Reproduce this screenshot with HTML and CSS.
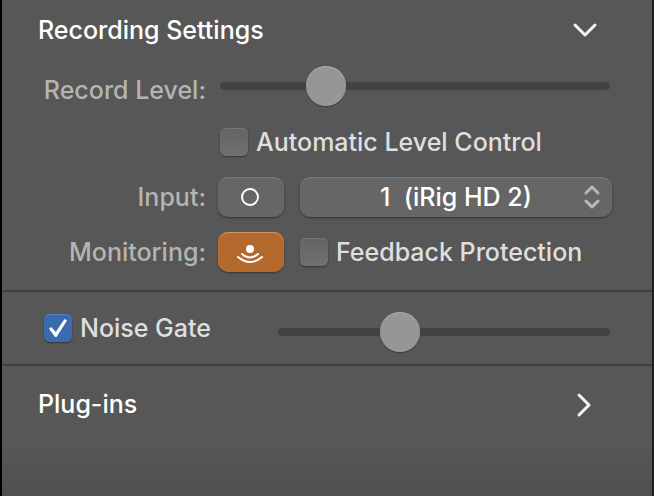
FILE: index.html
```html
<!DOCTYPE html>
<html lang="en">
  <head>
    <meta charset="UTF-8" />
    <meta name="viewport" content="width=device-width, initial-scale=1.0" />
    <title>Recording Settings</title>
    <link rel="stylesheet" href="styles.css">
  </head>
  <body>
    <main class="panel">
      <section class="section recording">
        <button class="section-header" type="button" aria-expanded="true">
          Recording Settings
          <svg class="chevron" viewBox="0 0 28 28" aria-hidden="true">
            <path d="M4 9l10 10L24 9" />
          </svg>
        </button>
        <div class="settings">
          <label class="name name-low" for="level">Record Level:</label>
          <div class="inset">
            <input class="slider" id="level" type="range" min="0" max="1000" value="246" />
          </div>

          <div class="inset second-column">
            <label class="check">
              <input type="checkbox" />
              Automatic Level Control
            </label>
          </div>

          <label class="name" for="input">Input:</label>
          <div class="controls">
            <button class="toggle" type="button" aria-label="Mono">
              <svg class="icon" viewBox="0 0 28 28" aria-hidden="true">
                <circle cx="13" cy="14" r="8" />
              </svg>
            </button>
            <div class="select-wrap">
              <select class="select" id="input">
                <option>1&nbsp; (iRig HD 2)</option>
              </select>
              <svg class="arrows" viewBox="0 0 16 24" aria-hidden="true">
                <path d="M2 8l6-6 6 6M2 16l6 6 6-6" />
              </svg>
            </div>
          </div>

          <label class="name" for="monitoring">Monitoring:</label>
          <div class="controls">
            <button class="toggle toggle-on" id="monitoring" type="button" aria-pressed="true">
              <svg class="icon" viewBox="0 0 28 28" aria-hidden="true">
                <circle class="dot" cx="13" cy="11" r="4" />
                <path d="M5 16q8 7 16 0M1 19q12 10 24 0" />
              </svg>
            </button>
            <label class="check">
              <input type="checkbox" />
              Feedback Protection
            </label>
          </div>
        </div>
      </section>

      <section class="section gate">
        <label class="check">
          <input type="checkbox" checked />
          Noise Gate
        </label>
        <input class="slider" type="range" min="0" max="100" value="35" aria-label="Noise Gate" />
      </section>

      <section class="plugins">
        <button class="section-header" type="button" aria-expanded="false">
          Plug-ins
          <svg class="chevron" viewBox="0 0 28 28" aria-hidden="true">
            <path d="M8 5l10 10L8 25" />
          </svg>
        </button>
      </section>
    </main>
  </body>
</html>
```
FILE: styles.css
```css
* {
  box-sizing: border-box;
}
body {
  margin: 0;
  background: #575757;
  color: #dfdfdf;
  font-family: Inter, "Liberation Sans", sans-serif;
  font-size: 25px;
  font-weight: 500;
  line-height: 32px;
}
button,
select,
input {
  font: inherit;
  margin: 0;
}
.panel {
  min-height: 100vh;
  border-left: 2px solid #000;
  border-right: 2px solid #1e1e1e;
  background: linear-gradient(to top, #4f4f4f, #575757 50px);
}
.section {
  border-bottom: 2px solid #404040;
}

/* section headers */
.section-header {
  display: flex;
  justify-content: space-between;
  align-items: center;
  width: 100%;
  height: 60px;
  padding: 0 53px 0 36px;
  border: none;
  background: none;
  color: #fff;
}
.chevron {
  width: 28px;
  height: 28px;
  fill: none;
  stroke: #f4f4f4;
  stroke-width: 3;
  stroke-linecap: round;
  stroke-linejoin: round;
}

/* recording settings */
.settings {
  display: grid;
  grid-template-columns: 168px 1fr;
  grid-template-rows: 40px 40px 38px 40px;
  gap: 16px 12px;
  align-items: center;
  padding: 6px 40px 18px 36px;
}
.name {
  color: #b4b4b4;
  text-align: right;
  white-space: nowrap;
}
.name-low {
  align-self: end;
}
.inset {
  display: flex;
  padding: 0 2px;
}
.second-column {
  grid-column: 2;
}
.controls {
  display: flex;
  align-items: center;
  gap: 16px;
}

/* slider */
.slider {
  appearance: none;
  width: 100%;
  height: 40px;
  background: none;
}
.slider::-webkit-slider-runnable-track {
  height: 8px;
  border-radius: 4px;
  background: #424242;
}
.slider::-webkit-slider-thumb {
  appearance: none;
  width: 40px;
  height: 40px;
  margin-top: -16px;
  border-radius: 50%;
  background: #969696;
  box-shadow: 0 1px 1px rgba(0, 0, 0, 0.3), inset 0 1px 1px #aaa;
}

/* checkbox */
.check {
  display: flex;
  align-items: center;
  gap: 8px;
  white-space: nowrap;
}
.check input {
  appearance: none;
  flex: none;
  width: 28px;
  height: 28px;
  border-radius: 6px;
  background: linear-gradient(#646464, #707070);
  box-shadow: 0 1px 2px rgba(0, 0, 0, 0.4), inset 0 1px 0 #777;
}
.check input:checked {
  display: grid;
  place-items: center;
  background: #3a6bb0;
  box-shadow: 0 1px 2px rgba(0, 0, 0, 0.4), inset 0 1px 0 #5480bd;
}
.check input:checked::before {
  content: "";
  width: 18px;
  height: 18px;
  background: #fff;
  clip-path: polygon(0 54%, 12% 44%, 38% 72%, 86% 0, 100% 9%, 42% 100%, 34% 100%);
}

/* buttons and select */
.toggle {
  display: flex;
  justify-content: center;
  align-items: center;
  flex: none;
  width: 66px;
  height: 40px;
  padding: 0;
  border: none;
  border-radius: 10px;
  background: #666;
  box-shadow: 0 1px 2px rgba(0, 0, 0, 0.4), inset 0 1px 1px #7b7b7b;
}
.toggle-on {
  background: #b2692b;
  box-shadow: 0 1px 2px rgba(0, 0, 0, 0.4), inset 0 1px 1px #cf9767;
}
.icon {
  width: 28px;
  height: 28px;
  fill: none;
  stroke: #fff;
  stroke-width: 2;
  stroke-linecap: round;
}
.icon .dot {
  fill: #fff;
  stroke: none;
}
.select-wrap {
  position: relative;
  flex: 1;
}
.select {
  appearance: none;
  display: block;
  width: 100%;
  height: 40px;
  padding: 0;
  border: none;
  border-radius: 10px;
  background: #666;
  box-shadow: 0 1px 2px rgba(0, 0, 0, 0.4), inset 0 1px 1px #7b7b7b;
  color: #fff;
  text-align: center;
  text-align-last: center;
}
.arrows {
  position: absolute;
  top: 8px;
  right: 12px;
  width: 16px;
  height: 24px;
  fill: none;
  stroke: #b8b8b8;
  stroke-width: 3;
  stroke-linecap: round;
  stroke-linejoin: round;
  pointer-events: none;
}

/* noise gate */
.gate {
  display: flex;
  align-items: flex-start;
  padding: 20px 42px 12px;
}
.gate .check {
  flex: none;
  width: 234px;
}

.plugins {
  padding: 8px 0;
}
```
